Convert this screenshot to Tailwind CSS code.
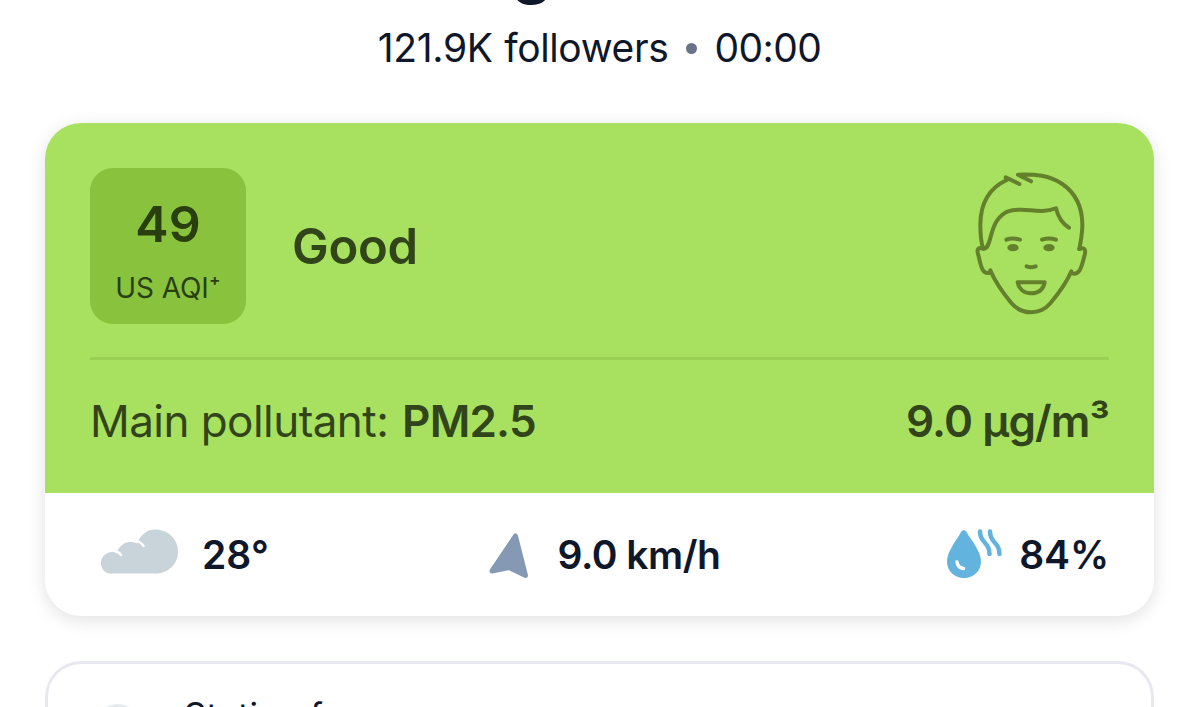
<!DOCTYPE html>
<html lang="en">
<head>
  <meta charset="UTF-8" />
  <meta name="viewport" content="width=device-width, initial-scale=1.0"/>
  <title>Air quality</title>
  <script src="https://cdn.jsdelivr.net/npm/@tailwindcss/browser@4"></script>
  <style>
    body {
      font-family: 'Inter', sans-serif;
    }
  </style>
</head>
<body class="bg-white h-[707px] overflow-hidden text-[#0f172a]">

  <header class="h-[122px] flex flex-col items-center">
    <h1 class="-mt-[78px] mr-[135px] h-[90px] text-[66px] leading-[90px] font-bold">g</h1>
    <p class="mt-[12px] flex items-center text-[39px] leading-[48px] whitespace-nowrap">
      <span class="tracking-[-0.35px] [word-spacing:1px]">121.9K followers</span>
      <span class="ml-[17px] mr-[18px] size-[11px] rounded-full bg-[#697489]"></span>
      <span class="tracking-[-0.6px]">00:00</span>
    </p>
  </header>

  <main class="px-[45px]">
    <!-- AQI card -->
    <section class="mt-[0.5px] h-[493.500px] rounded-[36px] overflow-hidden bg-white shadow-[0_4px_18px_rgba(0,0,0,0.12)]">
      <div class="h-[370.500px] px-[45px] pt-[44.500px] bg-[#a8e15f] text-[#32451a]">
        <div class="flex items-center h-[157px]">
          <div class="size-[156px] rounded-[23px] bg-[#89c23d] text-[#2a3f10] flex flex-col items-center">
            <p class="mt-[27px] text-[50px] leading-[58px] font-semibold">49</p>
            <p class="mt-[18px] text-[28px] leading-[34px] tracking-[-0.1px] whitespace-nowrap">US AQI⁺</p>
          </div>
          <p class="ml-[46px] mt-[2px] text-[49px] leading-[60px] tracking-[-0.3px] font-semibold">Good</p>
          <svg class="ml-auto mr-[9px] mb-[6px] w-[140px] h-[165px]" viewBox="0 0 420 495" fill="none" stroke="#64802c" stroke-width="12" stroke-linecap="round" stroke-linejoin="round">
            <path d="M137 52L178 72M140 60C80 88 61 140 61 195C61 225 64 248 69 266C92 270 88 215 111 182C132 151 155 149 184 149C220 150 248 159 288 145C294 170 305 190 327 203"/>
            <path d="M213 64L174 44C225 42 268 46 307 72C352 103 368 150 367 200C366 225 362 247 358 267"/>
            <path d="M69 266C52 260 50 272 55 285C62 311 65 348 91 337M358 267C374 260 378 270 374 285C366 312 362 348 336 340"/>
            <path d="M91 331C105 365 128 398 154 429C171 449 188 457 213 457C239 457 255 449 271 430C298 398 321 365 334 334"/>
            <path d="M139 239C151 234 165 234 180 239M246 239C260 234 274 234 288 239M200 319C207 322 219 322 227 319"/>
            <path d="M173 367H254C250 388 236 400 213 400C191 400 177 387 173 367Z"/>
            <ellipse cx="159" cy="263" rx="17" ry="11" fill="#64802c" stroke="none"/>
            <ellipse cx="267" cy="263" rx="17" ry="11" fill="#64802c" stroke="none"/>
          </svg>
        </div>
        <div class="mt-[33px] h-[3px] bg-[#99d053]"></div>
        <div class="mt-[34px] flex justify-between text-[44px] leading-[54px] whitespace-nowrap">
          <p class="tracking-[-0.55px]">Main pollutant: <span class="ml-[2px] font-semibold tracking-[-0.8px]">PM2.5</span></p>
          <p class="font-semibold tracking-[-0.9px]">9.0 µg/m³</p>
        </div>
      </div>

      <!-- weather -->
      <div class="h-[123px] px-[45px] flex items-center justify-between text-[39px] leading-[48px] font-semibold whitespace-nowrap">
        <div class="flex items-center">
          <svg class="ml-[11px] mr-[24px] mb-[6px] w-[77px] h-[45px]" viewBox="0 0 77 45" fill="none">
            <path d="M10 44.500C4 44.500 0 40 0 34C0 28 5 23 11 23C13 23 14.500 23.500 16 24C18 17 23 13 29 13C32 13 34 13.500 36 14.500C40 5 46 .5 54 .5C67 .5 77 10 77 22.500C77 35 67 44.500 55 44.500Z" fill="#c9d3da"/>
            <path d="M15 22.500Q18.500 23.500 20 26M35 12Q40 13 42.500 17" stroke="#fff" stroke-width="2.500" stroke-linecap="round"/>
          </svg>
          <span>28°</span>
        </div>
        <div class="mr-[7px] flex items-center">
          <svg class="mr-[29px] w-[40px] h-[48px]" viewBox="0 0 40 48">
            <path d="M26.500 5L36.500 44.500L20 36.500L3 40Z" fill="#8599b4" stroke="#8599b4" stroke-width="5" stroke-linejoin="round"/>
          </svg>
          <span class="tracking-[-0.5px]">9.0 km/h</span>
        </div>
        <div class="flex items-center">
          <svg class="mr-[17px] mb-[2px] w-[55px] h-[50px]" viewBox="0 0 55 50" fill="none" stroke-linecap="round">
            <path d="M14 3C15.500 .5 18 .5 19.500 3C24 11 34 22 34 32.500C34 42 26.500 49 17 49C7.500 49 0 42 0 32.500C0 22 10 11 14 3Z" fill="#62b3de"/>
            <path d="M10 33C10.500 37 12.500 39 16.500 39.500" stroke="#fff" stroke-width="3.500"/>
            <path d="M33 2.500C33 15 42.500 12 42.500 25M43 2.500C43 15 52.500 12 52.500 25" stroke="#62b3de" stroke-width="4.500"/>
          </svg>
          <span class="tracking-[-0.1px]">84%</span>
        </div>
      </div>
    </section>

    <!-- station card -->
    <section class="mt-[45px] h-[46px] overflow-hidden rounded-t-[36px] border-[3px] border-b-0 border-[#e8e8f0] bg-white flex items-start pl-[48px] pt-[30px]">
      <div class="mt-[10px] size-[44px] shrink-0 rounded-full bg-[#e6e9eb]"></div>
      <p class="ml-[44px] text-[35px] leading-[43px] tracking-[0.1px]">Station from</p>
    </section>
  </main>

</body>
</html>
